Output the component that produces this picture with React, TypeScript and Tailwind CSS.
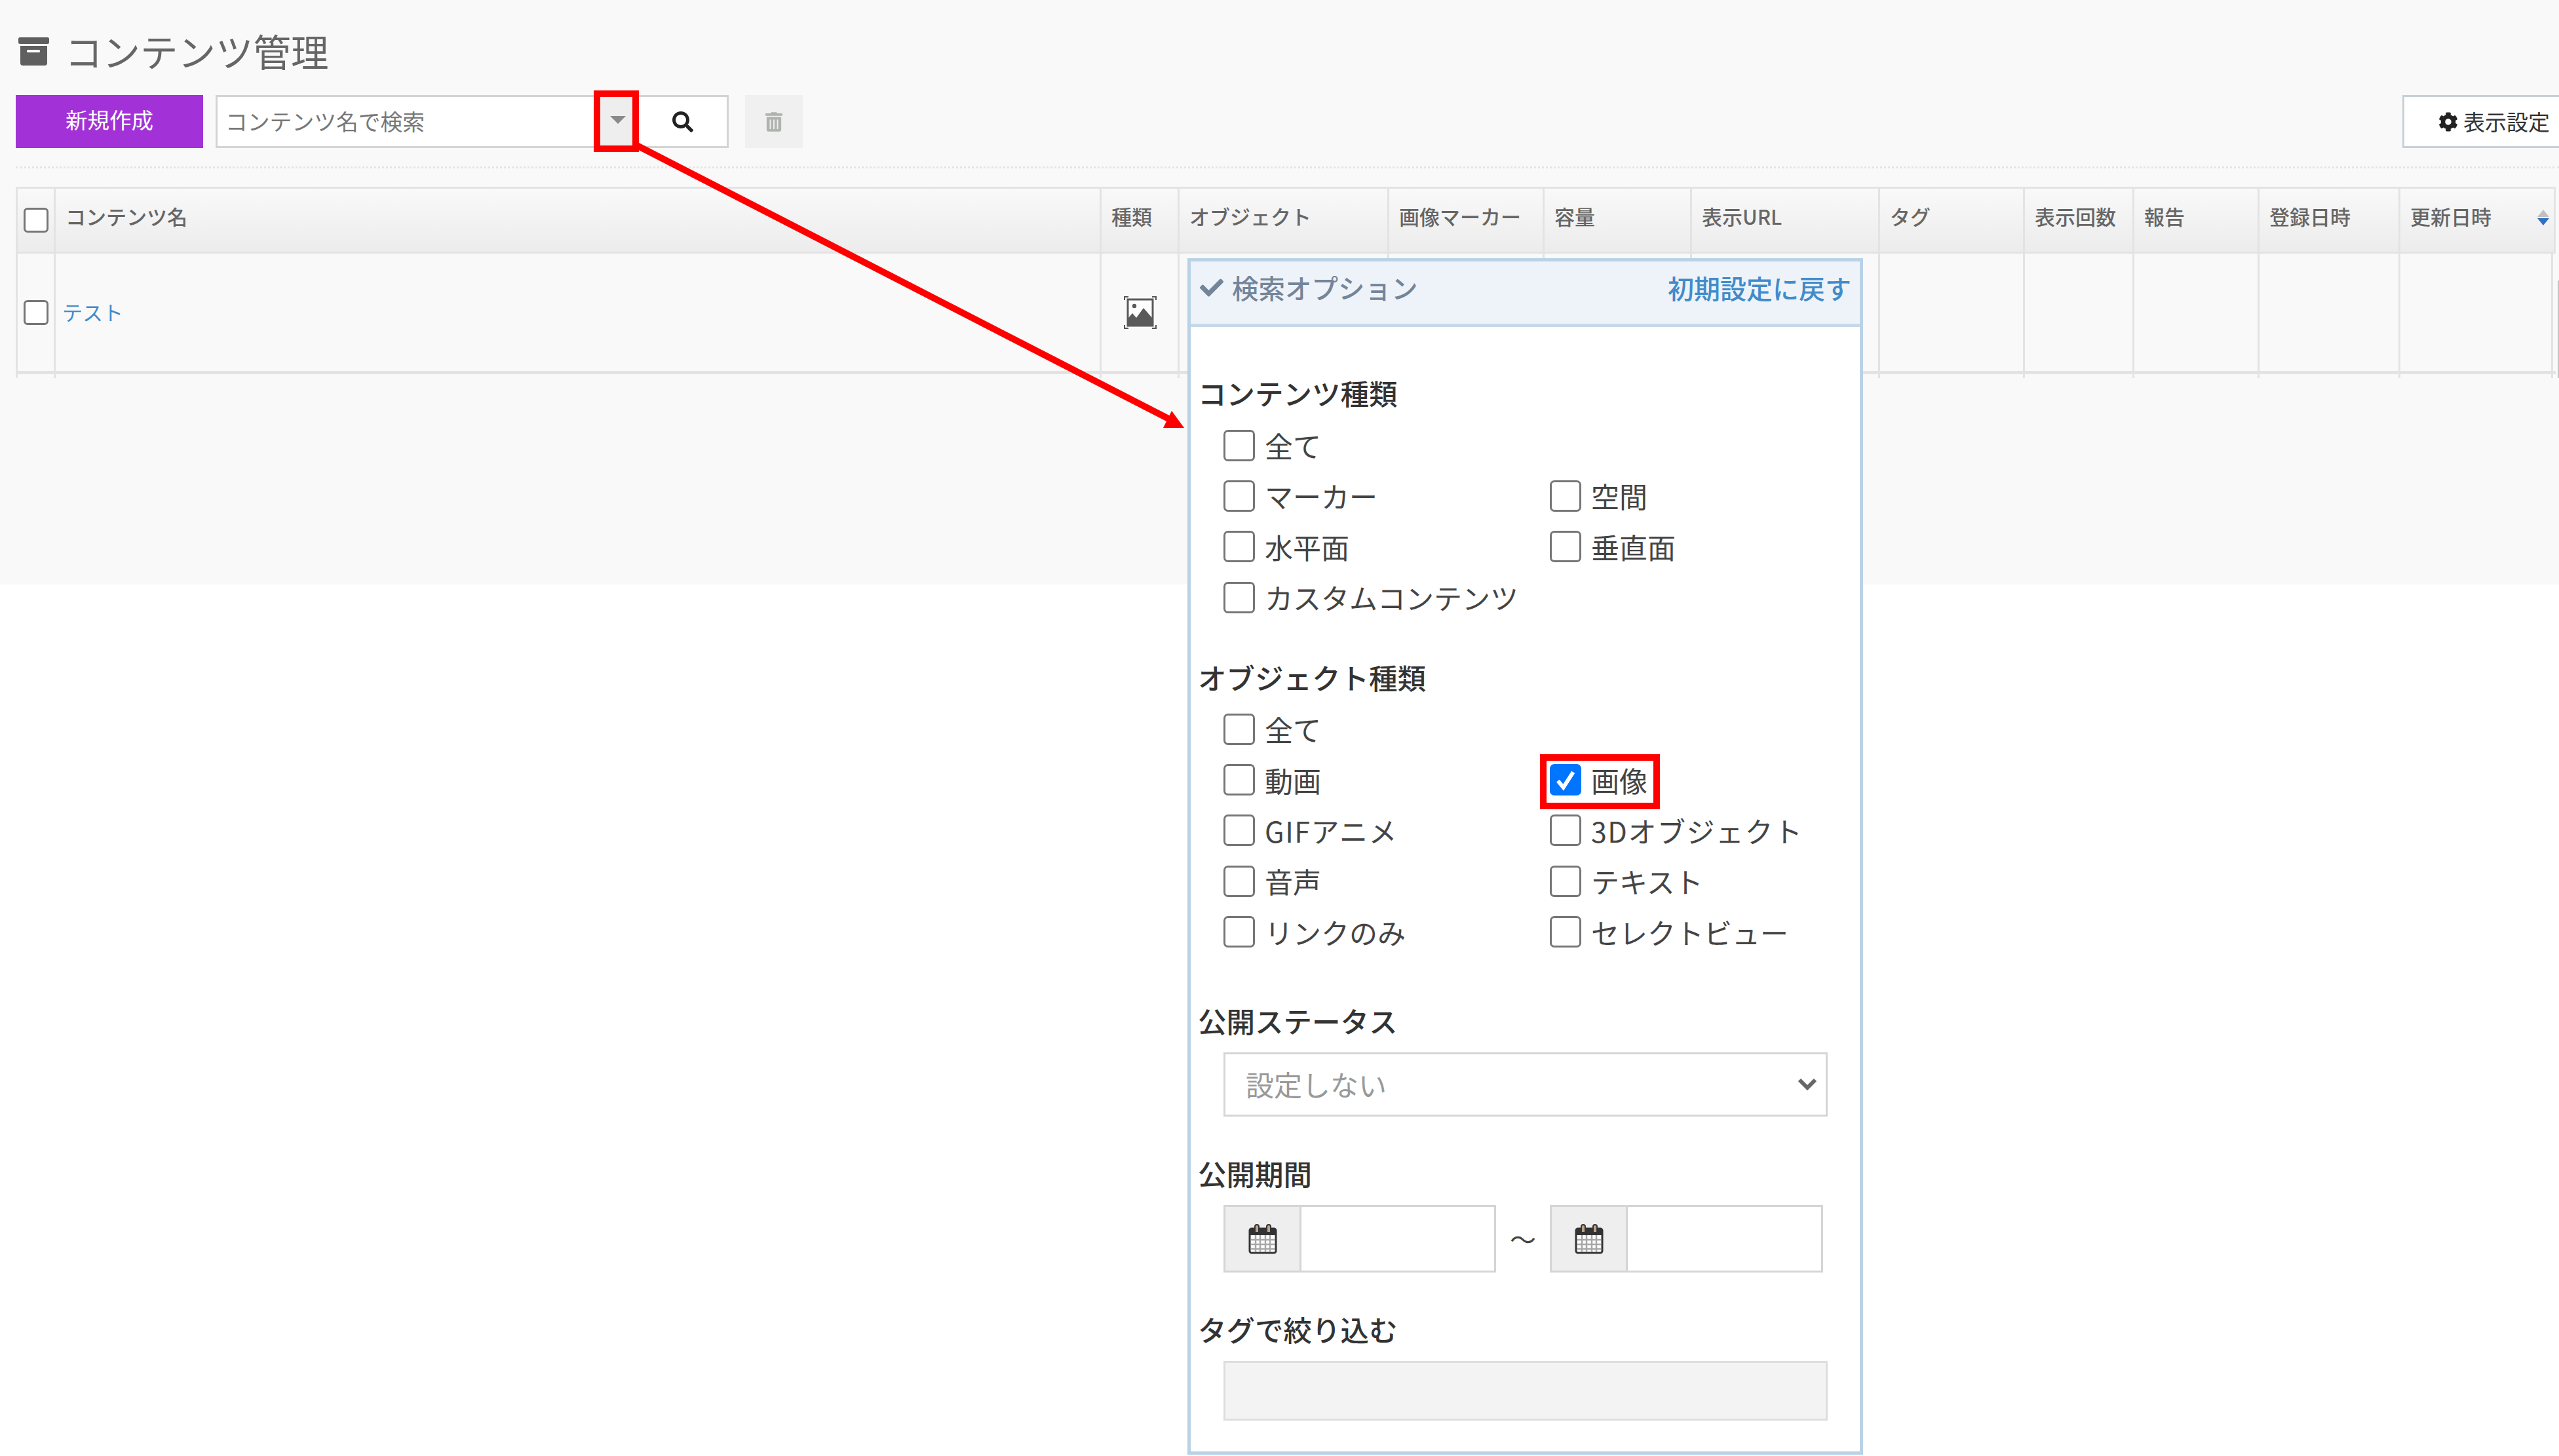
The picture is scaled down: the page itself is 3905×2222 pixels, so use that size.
import React from "react";
import { FaSearch, FaTrashAlt, FaCog, FaCheck } from "react-icons/fa";

const font = "font-['Noto_Sans_CJK_JP','Noto_Sans',sans-serif]";

function Check({ checked = false }: { checked?: boolean }) {
  if (checked) {
    return (
      <span className="flex h-[48px] w-[48px] shrink-0 items-center justify-center rounded-[7px] bg-[#0075ff]">
        <svg viewBox="0 0 24 24" className="h-[40px] w-[40px]">
          <path d="M5 13l5 6L19 5" fill="none" stroke="#fff" strokeWidth="3.6" />
        </svg>
      </span>
    );
  }
  return <span className="block h-[48px] w-[48px] shrink-0 rounded-[7px] border-[3px] border-[#767676] bg-white" />;
}

function Opt({ label, checked, wide }: { label: string; checked?: boolean; wide?: boolean }) {
  return (
    <div className="flex h-[77.3px] items-center gap-[15px]">
      <Check checked={checked} />
      <span className={`whitespace-nowrap text-[43px] leading-none text-[#444] ${wide ? "tracking-[1.5px]" : ""}`}>
        {label}
      </span>
    </div>
  );
}

function Section({ children }: { children: React.ReactNode }) {
  return <div className="text-[43.5px] font-medium leading-[60px] text-[#333]">{children}</div>;
}

function Calendar() {
  return (
    <svg viewBox="0 0 44 48" className="h-[48px] w-[44px]">
      <rect x="2" y="9" width="40" height="37" rx="3" fill="#fff" stroke="#333" strokeWidth="3" />
      <rect x="2" y="9" width="40" height="10" fill="#333" />
      <path d="M10 14V6a3 3 0 0 1 6 0v8M28 14V6a3 3 0 0 1 6 0v8" fill="#b9a58a" stroke="#333" strokeWidth="2" />
      <path d="M4 26h36M4 33h36M4 40h36M11 19v25M18 19v25M26 19v25M33 19v25" stroke="#a8a8a8" strokeWidth="2.5" />
    </svg>
  );
}

function DateField({ w }: { w: string }) {
  return (
    <div className={`flex h-[103px] border-[3px] border-[#d5d5d5] bg-white ${w}`}>
      <div className="flex w-[116px] items-center justify-center border-r-[3px] border-[#d5d5d5] bg-[#eeeeee]">
        <Calendar />
      </div>
    </div>
  );
}

const cols = [
  { w: "w-[58px]", label: "" },
  { w: "w-[1596px]", label: "コンテンツ名" },
  { w: "w-[119px]", label: "種類" },
  { w: "w-[320px]", label: "オブジェクト" },
  { w: "w-[237px]", label: "画像マーカー" },
  { w: "w-[225px]", label: "容量" },
  { w: "w-[287px]", label: "表示URL" },
  { w: "w-[221px]", label: "タグ" },
  { w: "w-[167px]", label: "表示回数" },
  { w: "w-[191px]", label: "報告" },
  { w: "w-[215px]", label: "登録日時" },
  { w: "w-[233px]", label: "更新日時" },
];

function ImageIcon() {
  return (
    <svg viewBox="0 0 50 50" className="h-[50px] w-[50px]">
      <path d="M1 6V1h6M43 1h6v5M1 44v5h6M49 44v5h-6" fill="none" stroke="#555" strokeWidth="2" />
      <rect x="6" y="5" width="38" height="40" fill="#fff" stroke="#5a5a5a" strokeWidth="3" />
      <circle cx="16" cy="15" r="3.2" fill="#5a5a5a" />
      <path d="M7 44V33l6-7 6 7 11-15 13 15v11z" fill="#5a5a5a" />
    </svg>
  );
}

function ArchiveIcon() {
  return (
    <svg viewBox="0 0 47 43" className="ml-[4px] h-[43px] w-[47px] shrink-0">
      <rect x="0" y="0" width="47" height="10" rx="2.5" fill="#5f5f5f" />
      <path d="M3 13h41v26a4 4 0 0 1-4 4H7a4 4 0 0 1-4-4z" fill="#5f5f5f" />
      <rect x="13" y="19" width="20" height="4" rx="1.5" fill="#fff" />
    </svg>
  );
}

export default function App() {
  return (
    <div className={`relative h-[2222px] w-[3905px] overflow-hidden bg-white ${font}`}>
      <div className="h-[892px] bg-[#f9f9f9] pl-[24px] pt-[46px]">
        <div className="flex h-[64px] items-center">
          <ArchiveIcon />
          <h1 className="ml-[24px] text-[57.5px] font-normal leading-none text-[#666]">コンテンツ管理</h1>
        </div>
        <div className="mt-[35px] flex h-[81px] items-stretch">
          <button className="w-[286px] shrink-0 bg-[#a232d8] pb-[6px] text-[33.5px] text-white">新規作成</button>
          <div className="ml-[19px] flex w-[783px] shrink-0 items-stretch border-[3px] border-[#d4d4d4] bg-white">
            <div className="flex flex-1 items-center pl-[12px] text-[33.8px] text-[#777]">コンテンツ名で検索</div>
            <div className="flex w-[60px] shrink-0 items-center justify-center bg-[#eeeeee] pb-[6px] pr-[5px]">
              <svg viewBox="0 0 24 12" className="h-[14px] w-[24px]">
                <path d="M0 0h24L12 12z" fill="#8a8a8a" />
              </svg>
            </div>
            <div className="flex w-[134px] shrink-0 items-center justify-center">
              <FaSearch className="h-[32px] w-[32px] text-[#222]" />
            </div>
          </div>
          <div className="ml-[25px] flex w-[88px] shrink-0 items-center justify-center bg-[#f0f0f0]">
            <FaTrashAlt className="h-[30px] w-[26px] text-[#aeb3ae]" />
          </div>
          <div className="ml-[2441px] flex w-[302px] shrink-0 items-center border-[3px] border-r-0 border-[#c8d0d4] bg-white pl-[52px]">
            <FaCog className="h-[30px] w-[30px] text-[#222]" />
            <span className="ml-[8px] whitespace-nowrap text-[33px] text-[#333]">表示設定</span>
          </div>
        </div>
        <div className="mt-[28px] border-t-[3px] border-dotted border-[#e4e4e4]" />
        <div className="mt-[28px] w-[3876px]">
          <div className="flex h-[102px] border-x-[3px] border-y-[3px] border-[#e3e3e3] bg-gradient-to-b from-[#f9f9f9] to-[#ececec]">
            {cols.map((c, i) => (
              <div
                key={i}
                className={`relative flex shrink-0 items-center border-r-[3px] border-[#e3e3e3] pb-[12px] pl-[15px] text-[31px] font-medium text-[#666] last:border-r-0 ${c.w}`}
              >
                {i === 0 ? (
                  <span className="-ml-[6px] mt-[12px] block h-[38px] w-[38px] shrink-0 rounded-[6px] border-[3px] border-[#767676] bg-white" />
                ) : (
                  c.label
                )}
                {i === 11 && (
                  <svg viewBox="0 0 18 24" className="absolute right-[6px] top-[32px] h-[24px] w-[18px]">
                    <path d="M9 0l9 11H0z" fill="#c0c0c0" />
                    <path d="M9 24L0 13h18z" fill="#2f6fc4" />
                  </svg>
                )}
              </div>
            ))}
          </div>
          <div className="flex h-[184px] border-b-[5px] border-l-[3px] border-[#e3e3e3]">
            {cols.map((c, i) => (
              <div key={i} className={`flex shrink-0 items-center border-r-[3px] border-[#e3e3e3] ${c.w}`}>
                {i === 0 && (
                  <span className="ml-[9px] block h-[38px] w-[38px] shrink-0 rounded-[6px] border-[3px] border-[#767676] bg-white" />
                )}
                {i === 1 && <a className="pl-[10px] text-[31px] text-[#428bca]">テスト</a>}
                {i === 2 && (
                  <span className="ml-[34px]">
                    <ImageIcon />
                  </span>
                )}
              </div>
            ))}
          </div>
          <div className="flex h-[6px] border-l-[3px] border-[#e3e3e3]">
            {cols.map((c, i) => (
              <div key={i} className={`shrink-0 border-r-[3px] border-[#e3e3e3] ${c.w}`} />
            ))}
          </div>
        </div>
      </div>

      <div className="absolute left-[3903px] top-[428px] h-[149px] w-[2px] bg-[#c4c4c4]" />

      <div className="absolute left-[1812px] top-[394px] h-[1826px] w-[1031px] border-[5px] border-[#b9d2e6] bg-white">
        <div className="flex h-[100px] items-center justify-between border-b-[5px] border-[#c6d9e9] bg-[#edf3f9] pb-[15px] pl-[14px] pr-[13px]">
          <div className="flex items-center">
            <FaCheck className="h-[36px] w-[36px] text-[#738599]" />
            <span className="ml-[13px] text-[40.5px] font-medium text-[#738599]">検索オプション</span>
          </div>
          <span className="text-[40px] font-medium text-[#428bca]">初期設定に戻す</span>
        </div>
        <div className="px-[11px] pt-[71px]">
          <Section>コンテンツ種類</Section>
          <div className="ml-[39px] grid w-[920px] grid-cols-[498px_1fr] pt-[11px]">
            <Opt label="全て" />
            <div />
            <Opt label="マーカー" />
            <Opt label="空間" />
            <Opt label="水平面" />
            <Opt label="垂直面" />
            <Opt label="カスタムコンテンツ" />
          </div>
          <div className="mt-[54px]">
            <Section>オブジェクト種類</Section>
          </div>
          <div className="ml-[39px] grid w-[920px] grid-cols-[498px_1fr] pt-[10px]">
            <Opt label="全て" />
            <div />
            <Opt label="動画" />
            <Opt label="画像" checked />
            <Opt label="GIFアニメ" wide />
            <Opt label="3Dオブジェクト" wide />
            <Opt label="音声" />
            <Opt label="テキスト" />
            <Opt label="リンクのみ" />
            <Opt label="セレクトビュー" />
          </div>
          <div className="mt-[67px]">
            <Section>公開ステータス</Section>
          </div>
          <div className="ml-[39px] mt-[18px] flex h-[98px] w-[922px] items-center justify-between border-[3px] border-[#d5d5d5] bg-white pl-[31px] pr-[13px] text-[43px] text-[#999]">
            <span>設定しない</span>
            <svg viewBox="0 0 30 20" className="h-[20px] w-[30px]">
              <path d="M3 3l12 12L27 3" fill="none" stroke="#666" strokeWidth="6" />
            </svg>
          </div>
          <div className="mt-[57px]">
            <Section>公開期間</Section>
          </div>
          <div className="ml-[39px] mt-[18px] flex items-center">
            <DateField w="w-[416px]" />
            <span className="w-[82px] text-center text-[40px] leading-none text-[#444]">～</span>
            <DateField w="w-[417px]" />
          </div>
          <div className="mt-[57px]">
            <Section>タグで絞り込む</Section>
          </div>
          <div className="ml-[39px] mt-[18px] h-[91px] w-[922px] border-[3px] border-[#dedede] bg-[#f3f3f3]" />
        </div>
      </div>

      <div className="absolute left-[906px] top-[138px] h-[94px] w-[69px] border-[10px] border-[#ff0000]" />
      <div className="absolute left-[2350px] top-[1151px] h-[84px] w-[183px] border-[10px] border-[#ff0000]" />
      <svg className="absolute left-0 top-0 h-[2222px] w-[3905px]" viewBox="0 0 3905 2222">
        <path d="M972 222L1785 640" stroke="#ff0000" strokeWidth="10" fill="none" />
        <path d="M1807 653L1788 627L1775 653z" fill="#ff0000" />
      </svg>
    </div>
  );
}
